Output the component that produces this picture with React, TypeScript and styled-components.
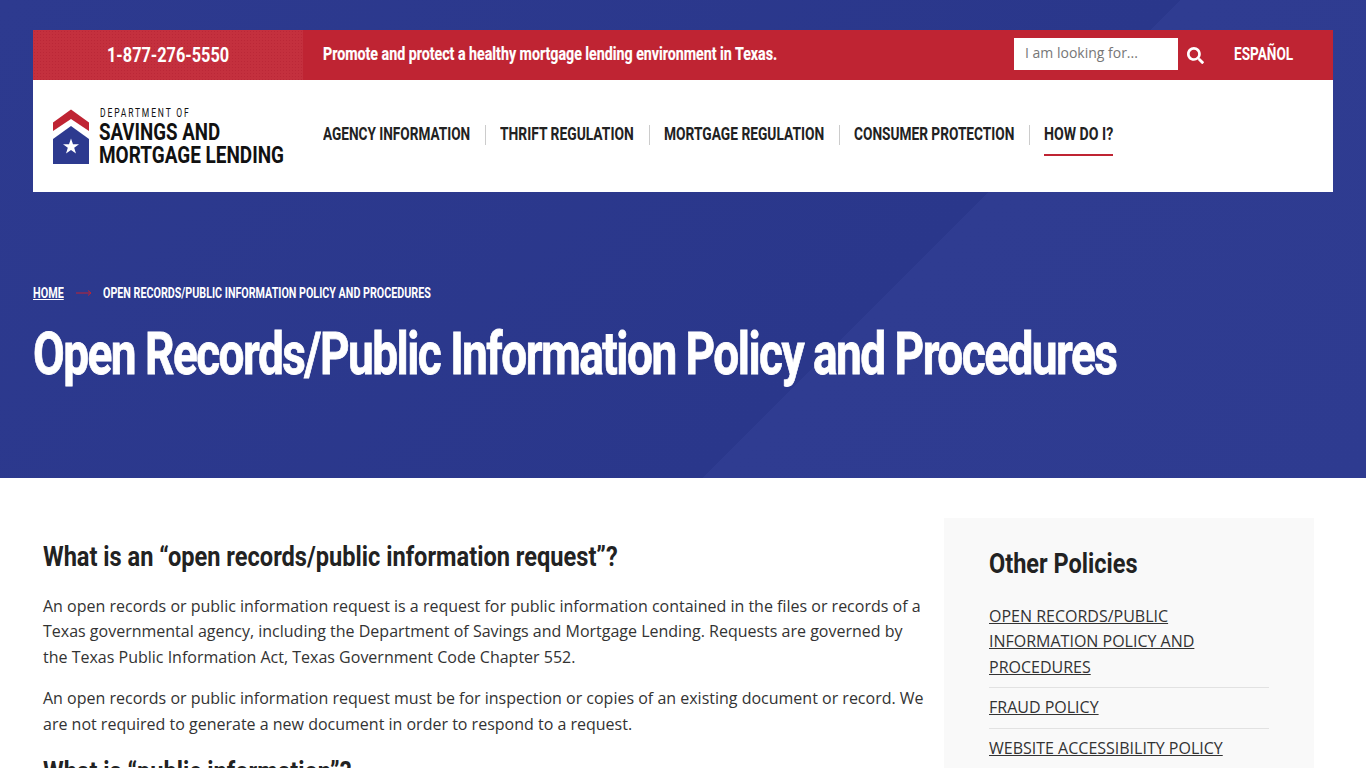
import React from "react";
import styled, { createGlobalStyle } from "styled-components";
import { FaSearch } from "react-icons/fa";

const narrow = `"Roboto", "Liberation Sans", sans-serif`;

const Global = createGlobalStyle`
  html, body { margin: 0; padding: 0; background: #fff; overflow: hidden; height: 768px; }
  body { font-family: "Open Sans", sans-serif; font-size: 16px; line-height: 25.6px; color: #333; }
`;
const Squeeze = styled.span<{ $s: number }>`
  display: inline-block;
  white-space: nowrap;
  transform: scaleX(${(p) => p.$s});
  transform-origin: left center;
`;
const Hero = styled.header`
  height: 478px;
  padding: 30px 33px 0;
  box-sizing: border-box;
  background: linear-gradient(135deg, #2d3a8f 0, #2a378b 64%, #2f3c91 64%, #2e3b90 100%);
  display: flex;
  flex-direction: column;
`;
const TopBar = styled.div`
  display: flex;
  align-items: center;
  height: 50px;
  background: #bf2433;
  color: #fff;
`;
const Phone = styled.div`
  width: 270px;
  height: 100%;
  display: flex;
  align-items: center;
  justify-content: center;
  font-family: ${narrow};
  font-weight: 700;
  font-size: 20px;
  background-color: #c4303e;
  background-image: radial-gradient(circle, rgba(170, 24, 44, 0.35) 0.8px, transparent 1px);
  background-size: 3px 3px;
`;
const PhoneNumber = styled.div`
  width: 122px;
  margin-top: 1px;
`;
const Tagline = styled.div`
  margin: -2px 0 0 20px;
  flex: 1;
  font-family: ${narrow};
  font-weight: 700;
  font-size: 18px;
  -webkit-text-stroke: 0.2px #fff;
`;
const SearchBox = styled.div`
  width: 164px;
  height: 32px;
  margin-bottom: 3px;
  background: #fff;
  color: #777;
  font-size: 14px;
  line-height: 30px;
  padding-left: 11px;
  box-sizing: border-box;
`;
const SearchIcon = styled(FaSearch)`
  width: 17px;
  height: 17px;
  margin-left: 9px;
  color: #fff;
`;
const Lang = styled.div`
  width: 59px;
  margin: -2px 40px 0 30px;
  font-family: ${narrow};
  font-weight: 700;
  font-size: 18px;
`;
const NavBar = styled.div`
  height: 112px;
  background: #fff;
  display: flex;
  align-items: center;
`;
const Logo = styled.div`
  width: 290px;
  padding-left: 20px;
  box-sizing: border-box;
  display: flex;
  align-items: center;
  gap: 10px;
  color: #111;
`;
const LogoMark = styled.svg`
  flex: none;
  width: 36px;
  height: 55px;
`;
const LogoText = styled.div`
  width: 190px;
  font-family: ${narrow};
  display: flex;
  flex-direction: column;
`;
const LogoSmall = styled.div`
  font-size: 12px;
  line-height: 15px;
  letter-spacing: 2.6px;
  margin-left: 1px;
`;
const LogoBig = styled.div`
  font-size: 24px;
  line-height: 23px;
  font-weight: 700;
`;
const Nav = styled.nav`
  display: flex;
  align-items: center;
`;
const NavItem = styled.a<{ $active?: boolean; $w: number }>`
  position: relative;
  width: ${(p) => p.$w}px;
  font-family: ${narrow};
  font-weight: 700;
  font-size: 18px;
  line-height: 22px;
  color: #222;
  margin: 0 30px 2px 0;
  padding: 9px 0;
  border-bottom: 2px solid ${(p) => (p.$active ? "#bf2433" : "transparent")};
  &::after {
    content: "";
    display: ${(p) => (p.$active ? "none" : "block")};
    position: absolute;
    right: -16px;
    top: 11px;
    height: 20px;
    width: 1px;
    background: #ccc;
  }
`;
const Crumbs = styled.div`
  margin-top: 90px;
  display: flex;
  align-items: center;
  font-family: ${narrow};
  font-weight: 700;
  font-size: 14px;
  line-height: 22px;
  color: #fff;
`;
const CrumbLink = styled.a`
  width: 31px;
  ${Squeeze} {
    text-decoration: underline;
  }
`;
const Arrow = styled.svg`
  width: 16px;
  height: 8px;
  margin: 0 11px 0 12px;
`;
const Title = styled.h1`
  margin: 17px 0 0;
  font-family: ${narrow};
  font-weight: 700;
  font-size: 46px;
  line-height: 64px;
  letter-spacing: -1.540px;
  white-space: nowrap;
  color: #fff;
  -webkit-text-stroke: 0.6px #fff;
  transform: scaleY(1.3);
`;
const Main = styled.main`
  display: flex;
  padding: 40px 52px 0 43px;
  gap: 20px;
`;
const Article = styled.article`
  width: 881px;
  padding-top: 21px;
`;
const H2 = styled.h2`
  margin: 0 0 18.700px;
  font-family: ${narrow};
  font-weight: 700;
  font-size: 28px;
  line-height: 36px;
  color: #222;
  p + & {
    margin-top: 1px;
  }
`;
const P = styled.p`
  margin: 0 0 16px;
`;
const Aside = styled.aside`
  width: 370px;
  background: #f9f9f9;
  padding: 28px 45px;
  box-sizing: border-box;
`;
const AsideTitle = styled.h3`
  margin: 0 0 21.600px;
  font-family: ${narrow};
  font-weight: 700;
  font-size: 28px;
  line-height: 36px;
  color: #222;
`;
const AsideLink = styled.a`
  display: block;
  color: #333;
  text-decoration: underline;
  text-transform: uppercase;
  padding-bottom: 7px;
  margin-bottom: 7px;
  border-bottom: 1px solid #e2e2e2;
`;

export default function App() {
  return (
    <>
      <Global />
      <Hero>
        <TopBar>
          <Phone>
            <PhoneNumber>
              <Squeeze $s={0.815}>1-877-276-5550</Squeeze>
            </PhoneNumber>
          </Phone>
          <Tagline>
            <Squeeze $s={0.79}>Promote and protect a healthy mortgage lending environment in Texas.</Squeeze>
          </Tagline>
          <SearchBox>I am looking for...</SearchBox>
          <SearchIcon />
          <Lang>
            <Squeeze $s={0.756}>ESPAÑOL</Squeeze>
          </Lang>
        </TopBar>
        <NavBar>
          <Logo>
            <LogoMark viewBox="0 0 36 55">
              <path d="M18 0.500L36 13.500V22L18 10L0 22V13.500Z" fill="#bf2433" />
              <path d="M18 17L36 30V55H0V30Z" fill="#2d3a8f" />
              <path d="M18 29.500L20 35.200H26L21.200 38.800L23 44.500L18 41L13 44.500L14.800 38.800L10 35.200H16Z" fill="#fff" />
            </LogoMark>
            <LogoText>
              <LogoSmall>
                <Squeeze $s={0.71}>DEPARTMENT OF</Squeeze>
              </LogoSmall>
              <LogoBig>
                <Squeeze $s={0.78}>SAVINGS AND</Squeeze>
              </LogoBig>
              <LogoBig>
                <Squeeze $s={0.79}>MORTGAGE LENDING</Squeeze>
              </LogoBig>
            </LogoText>
          </Logo>
          <Nav>
            <NavItem $w={147}>
              <Squeeze $s={0.756}>AGENCY INFORMATION</Squeeze>
            </NavItem>
            <NavItem $w={134}>
              <Squeeze $s={0.768}>THRIFT REGULATION</Squeeze>
            </NavItem>
            <NavItem $w={160}>
              <Squeeze $s={0.765}>MORTGAGE REGULATION</Squeeze>
            </NavItem>
            <NavItem $w={160}>
              <Squeeze $s={0.76}>CONSUMER PROTECTION</Squeeze>
            </NavItem>
            <NavItem $w={69} $active>
              <Squeeze $s={0.785}>HOW DO I?</Squeeze>
            </NavItem>
          </Nav>
        </NavBar>
        <Crumbs>
          <CrumbLink>
            <Squeeze $s={0.775}>HOME</Squeeze>
          </CrumbLink>
          <Arrow viewBox="0 0 16 8">
            <path d="M0 4H15M12 1.500L15 4L12 6.500" fill="none" stroke="#bf2433" strokeWidth="1" />
          </Arrow>
          <Squeeze $s={0.766}>OPEN RECORDS/PUBLIC INFORMATION POLICY AND PROCEDURES</Squeeze>
        </Crumbs>
        <Title>Open Records/Public Information Policy and Procedures</Title>
      </Hero>
      <Main>
        <Article>
          <H2>
            <Squeeze $s={0.843}>What is an “open records/public information request”?</Squeeze>
          </H2>
          <P>An open records or public information request is a request for public information contained in the files or records of a Texas governmental agency, including the Department of Savings and Mortgage Lending. Requests are governed by the Texas Public Information Act, Texas Government Code Chapter 552.</P>
          <P>An open records or public information request must be for inspection or copies of an existing document or record. We are not required to generate a new document in order to respond to a request.</P>
          <H2>
            <Squeeze $s={0.843}>What is “public information”?</Squeeze>
          </H2>
        </Article>
        <Aside>
          <AsideTitle>
            <Squeeze $s={0.84}>Other Policies</Squeeze>
          </AsideTitle>
          <AsideLink>Open Records/Public Information Policy and Procedures</AsideLink>
          <AsideLink>Fraud Policy</AsideLink>
          <AsideLink>Website Accessibility Policy</AsideLink>
        </Aside>
      </Main>
    </>
  );
}
